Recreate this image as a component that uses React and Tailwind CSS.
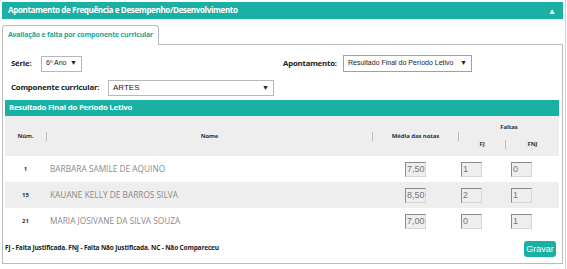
import React from 'react';

const alunos = [
  { num: '1', nome: 'BARBARA SAMILE DE AQUINO', media: '7,50', fj: '1', fnj: '0' },
  { num: '15', nome: 'KAUANE KELLY DE BARROS SILVA', media: '8,50', fj: '2', fnj: '1' },
  { num: '21', nome: 'MARIA JOSIVANE DA SILVA SOUZA', media: '7,00', fj: '0', fnj: '1' },
];

function Campo({ valor }) {
  return (
    <div className="w-[21px] h-[15px] bg-[#eeeeee] border border-t-[#8a8a8a] border-l-[#8a8a8a] border-r-[#d6d6d6] border-b-[#d6d6d6] text-[9px] leading-[13px] text-[#777] font-['Liberation_Sans'] pl-px">
      {valor}
    </div>
  );
}

function Select({ texto, className }) {
  return (
    <div className={`flex items-center justify-between whitespace-nowrap bg-white border px-[4px] font-['Liberation_Sans'] text-[#222] ${className}`}>
      <span>{texto}</span>
      <span className="text-[7px]">▼</span>
    </div>
  );
}

function Sep() {
  return <div className="w-px h-[9px] bg-[#bdbdbd]" />;
}

function Center({ children }) {
  return <div className="w-px flex items-center">{children}</div>;
}

export default function App() {
  return (
    <div className="w-[567px] h-[269px] bg-white overflow-hidden font-['Open_Sans']">
      <div className="w-[566px] h-[269px] border-r border-[#cfcfcf] pt-[2px] pl-[2px]">
        <div className="w-[561px] h-[17px] bg-[#1ab1a4] flex items-center justify-between pl-[6px] pr-[7px]">
          <span className="text-white font-bold text-[8.1px] tracking-[-0.4px]">
            Apontamento de Frequência e Desempenho/Desenvolvimento
          </span>
          <span className="text-white text-[8px] leading-none">▲</span>
        </div>

        <div className="mt-[6px] relative z-10 w-[157px] h-[20px] -mb-px bg-white border border-b-0 border-[#bcbcbc] rounded-t-[3px] flex items-center justify-center">
          <span className="text-[#1aa89b] font-bold text-[7px] tracking-[-0.2px]">
            Avaliação e falta por componente curricular
          </span>
        </div>

        <div className="w-[561px] h-[220px] border border-[#bcbcbc] pl-[2px] pt-[10px] flex flex-col">
          <div className="flex items-center h-[17px]">
            <div className="w-[278px] flex items-center pl-[6px]">
              <span className="w-[30px] font-bold text-[7.8px] tracking-[-0.2px] text-[#222]">Série:</span>
              <Select texto="6º Ano" className="w-[41px] h-[16px] text-[7px] border-[#b8b8b8]" />
            </div>
            <span className="w-[60px] font-bold text-[7.8px] tracking-[-0.2px] text-[#222]">Apontamento:</span>
            <Select texto="Resultado Final do Período Letivo" className="w-[129px] h-[17px] text-[7px] border-[#7fa6d4]" />
          </div>

          <div className="flex items-center h-[16px] mt-[8px] pl-[6px]">
            <span className="w-[97px] font-bold text-[7.8px] tracking-[-0.2px] text-[#222]">Componente curricular:</span>
            <Select texto="ARTES" className="w-[166px] h-[16px] text-[8px] border-[#b8b8b8]" />
          </div>

          <div className="w-[554px] mt-[4px]">
            <div className="h-[16px] bg-[#1ab1a4] flex items-center pl-[4px]">
              <span className="text-white font-bold text-[7.8px] tracking-[-0.2px]">Resultado Final do Período Letivo</span>
            </div>

            <div className="h-[40px] bg-[#eeeeee] flex text-[6px] font-bold tracking-[-0.1px] text-[#333]">
              <div className="w-[41px] flex items-center justify-center">Núm.</div>
              <Center><Sep /></Center>
              <div className="w-[325px] flex items-center justify-center">Nome</div>
              <Center><Sep /></Center>
              <div className="w-[85px] flex items-center justify-center">Média das notas</div>
              <Center><Sep /></Center>
              <div className="flex-1 flex flex-col">
                <div className="h-[17px] flex items-end justify-center pb-[1px]">Faltas</div>
                <div className="flex flex-1 items-center">
                  <div className="w-[46px] flex justify-center">FJ</div>
                  <Sep />
                  <div className="flex-1 flex justify-center">FNJ</div>
                </div>
              </div>
            </div>

            {alunos.map((a, i) => (
              <div key={a.num} className={`h-[26px] flex items-center ${i === 1 ? 'bg-[#eeeeee]' : 'bg-white'}`}>
                <div className="w-[41px] text-center text-[6px] font-bold text-[#333]">{a.num}</div>
                <div className="w-[326px] pl-[4px] text-[8.3px] text-[#8a8a8a]">{a.nome}</div>
                <div className="w-[86px] flex justify-center pl-[1px]"><Campo valor={a.media} /></div>
                <div className="w-[47px] pl-[3px]"><Campo valor={a.fj} /></div>
                <div className="flex-1 pl-[6px]"><Campo valor={a.fnj} /></div>
              </div>
            ))}
          </div>

          <div className="flex items-start justify-between w-[554px] mt-[7px]">
            <span className="mt-[2px] text-[6.5px] font-bold tracking-[-0.15px] text-[#222]">
              FJ - Falta Justificada. FNJ - Falta Não Justificada. NC - Não Compareceu
            </span>
            <button className="mr-[3px] w-[32px] h-[16px] bg-[#1ab1a4] rounded-[3px] text-white text-[9px] font-['Liberation_Sans'] leading-none">
              Gravar
            </button>
          </div>
        </div>
      </div>
    </div>
  );
}
